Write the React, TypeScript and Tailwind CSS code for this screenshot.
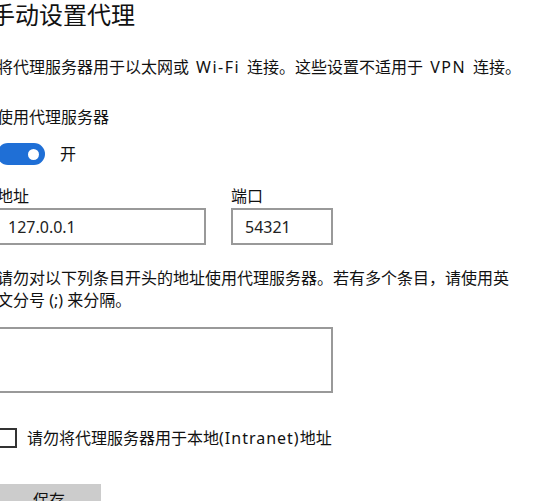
import React from "react";

export default function App() {
  const font = { fontFamily: '"Noto Sans", "Noto Sans CJK SC", sans-serif' };
  return (
    <div className="w-[554px] h-[501px] overflow-hidden bg-white text-black" style={font}>
      <div className="-ml-[3px] flex flex-col items-start">
        <div className="-ml-[6px] h-[30px] text-[24px] leading-[30px] text-[#111]">手动设置代理</div>
        <div className="mt-[26px] text-[16px] leading-[22px] text-[#111] whitespace-nowrap">
          将代理服务器用于以太网或<span className="px-[7px] tracking-[1.5px]">Wi-Fi</span>连接。这些设置不适用于<span className="px-[7px] tracking-[1.5px]">VPN</span>连接。
        </div>
        <div className="mt-[28px] text-[16px] leading-[22px] text-[#111]">使用代理服务器</div>
        <div className="mt-[15px] flex items-center gap-[15px]">
          <div className="w-[48px] h-[22px] rounded-full bg-[#1f6fd6] flex items-center justify-end pr-[6px]">
            <div className="w-[11px] h-[11px] rounded-full bg-white" />
          </div>
          <span className="text-[16px] leading-[22px] text-[#111]">开</span>
        </div>
        <div className="mt-[20px] flex gap-[25px]">
          <div className="flex flex-col w-[209px]">
            <span className="text-[16px] leading-[22px] text-[#111]">地址</span>
            <div className="mt-px h-[37px] border-2 border-[#999] flex items-center pl-[9px] text-[16px] text-[#222]">
              127.0.0.1
            </div>
          </div>
          <div className="flex flex-col w-[102px]">
            <span className="text-[16px] leading-[22px] text-[#111]">端口</span>
            <div className="mt-px h-[37px] border-2 border-[#999] flex items-center pl-[12px] text-[16px] text-[#222]">
              54321
            </div>
          </div>
        </div>
        <div className="mt-[22px] w-[520px] text-[16px] leading-[22px] text-[#111]">
          请勿对以下列条目开头的地址使用代理服务器。若有多个条目，请使用英文分号 (;) 来分隔。
        </div>
        <div className="mt-[16px] w-[336px] h-[66px] border-2 border-[#999]" />
        <div className="mt-[34px] flex items-center gap-[10px]">
          <div className="w-[20px] h-[20px] border-2 border-[#333]" />
          <span className="text-[16px] leading-[22px] text-[#111] whitespace-nowrap">
            请勿将代理服务器用于本地<span className="tracking-[1px]">(Intranet)</span>地址
          </span>
        </div>
        <div className="mt-[35px] w-[104px] h-[32px] bg-[#cccccc] flex items-center justify-center text-[16px] text-[#111]">
          保存
        </div>
      </div>
    </div>
  );
}
